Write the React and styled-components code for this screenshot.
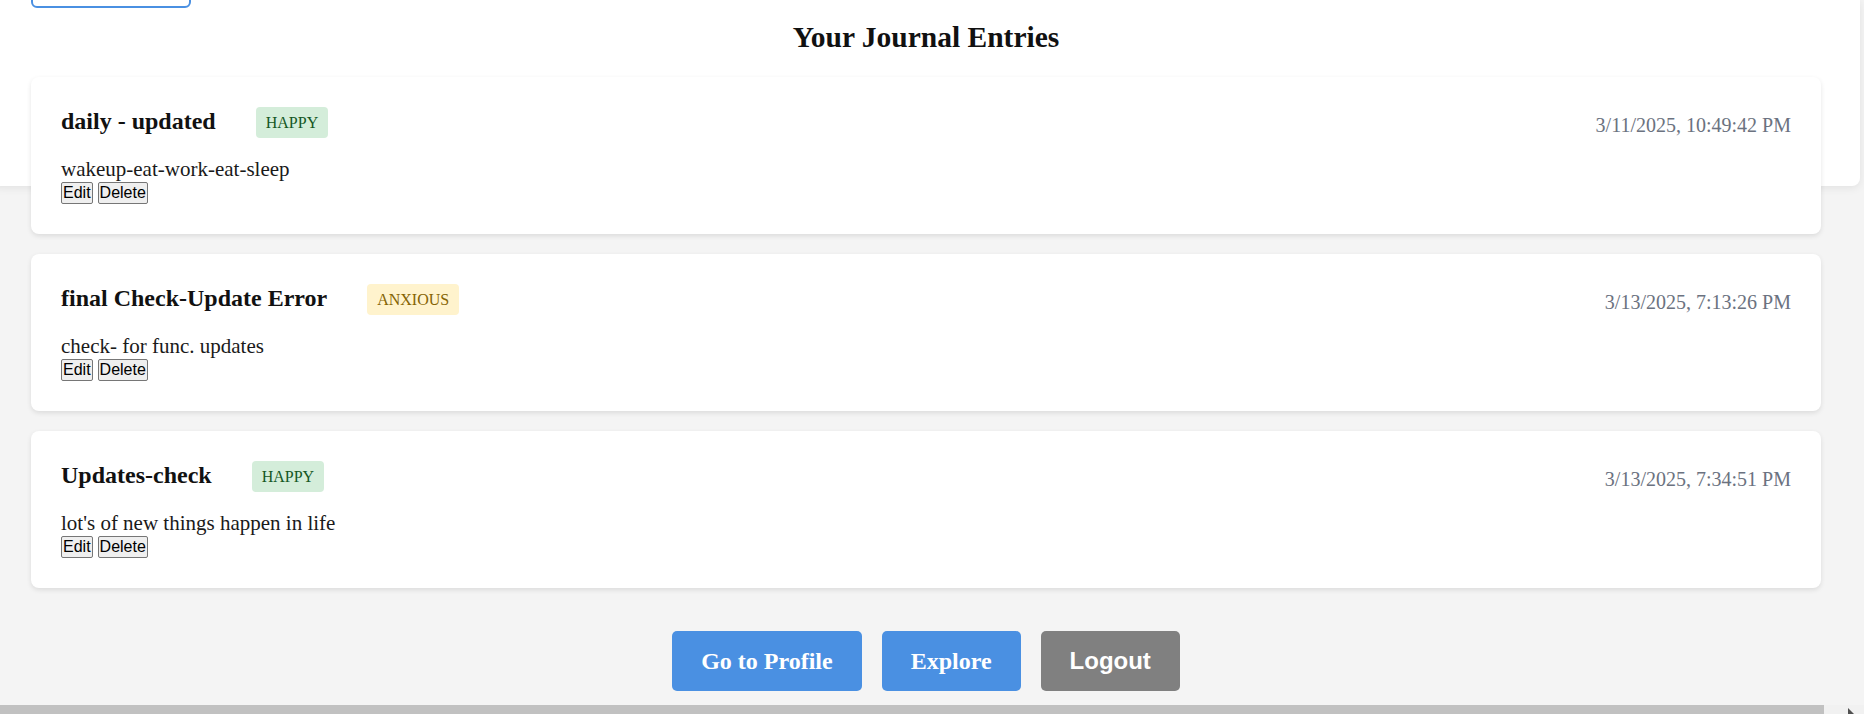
import React from "react";
import styled, { createGlobalStyle } from "styled-components";

const GlobalStyle = createGlobalStyle`
  html {
    background: #f4f4f4;
  }
  body {
    margin: 0;
    padding: 0;
    background: #f4f4f4;
    font-family: "Liberation Serif", "Times New Roman", serif;
    color: #1a1a1a;
  }
  * { box-sizing: border-box; }
`;

const Page = styled.main`
  display: flow-root;
`;

const Panel = styled.header`
  display: flow-root;
  width: 1868px;
  height: 186px;
  margin-left: -8px;
  padding: 0 39px;
  background: #ffffff;
  border-radius: 0 0 8px 8px;
  box-shadow: 0 2px 8px rgba(0, 0, 0, 0.08);
`;

const ComposeBox = styled.div`
  width: 160px;
  height: 40px;
  margin-top: -32px;
  border: 2px solid #4a90e2;
  border-radius: 6px;
  background: #ffffff;
`;

const PageTitle = styled.h2`
  margin: 13px 0 0;
  text-align: center;
  font-size: 29.5px;
  font-weight: 700;
  line-height: 33px;
  color: #111;
`;

const Content = styled.section`
  padding: 0 43px 0 31px;
`;

const EntryList = styled.div`
  display: flex;
  flex-direction: column;
  gap: 20px;
  margin-top: -109px;
`;

const Card = styled.article`
  padding: 30px;
  background: #ffffff;
  border-radius: 8px;
  box-shadow: 0 2px 5px rgba(0, 0, 0, 0.1);
`;

const CardHeader = styled.div`
  display: flex;
  justify-content: space-between;
  align-items: center;
`;

const TitleGroup = styled.div`
  display: flex;
  align-items: center;
  gap: 40px;
`;

const EntryTitle = styled.h3`
  margin: -4px 0 0;
  font-size: 24px;
  font-weight: 700;
  line-height: 28px;
  color: #111;
`;

const moodColors = {
  happy: { bg: "#d4edda", fg: "#155724" },
  anxious: { bg: "#fff3cd", fg: "#856404" },
};

const MoodBadge = styled.span`
  display: inline-block;
  padding: 6px 10px;
  font-size: 16px;
  line-height: 19px;
  border-radius: 4px;
  background: ${(p) => moodColors[p.$mood].bg};
  color: ${(p) => moodColors[p.$mood].fg};
`;

const EntryDate = styled.span`
  padding-top: 6px;
  font-size: 20px;
  line-height: 23px;
  color: #6b7280;
`;

const EntryContent = styled.p`
  margin: 18px 0 0;
  font-size: 21px;
  line-height: 26px;
  color: #1a1a1a;
`;

const Actions = styled.div`
  display: flex;
  gap: 5px;
`;

const SmallButton = styled.button`
  font-family: "Liberation Sans", Arial, sans-serif;
  font-size: 16px;
  line-height: 18px;
  padding: 1px 1px;
  border: 1px solid #767676;
  border-radius: 2px;
  background: #efefef;
  color: #000;
`;

const NavBar = styled.nav`
  display: flex;
  justify-content: center;
  gap: 20px;
  margin-top: 43px;
`;

const NavButton = styled.button`
  padding: 16px 29px;
  border: none;
  border-radius: 5px;
  font-family: ${(p) =>
    p.$variant === "muted"
      ? '"Liberation Sans", Arial, sans-serif'
      : '"Liberation Serif", "Times New Roman", serif'};
  font-size: 24px;
  font-weight: 700;
  line-height: 28px;
  color: #ffffff;
  background: ${(p) => (p.$variant === "muted" ? "#808080" : "#4a90e2")};
`;

const ScrollStrip = styled.div`
  position: fixed;
  left: 0;
  right: 0;
  top: 705px;
  height: 9px;
  display: flex;
  background: #f1f1f1;
`;

const ScrollThumb = styled.div`
  width: 1824px;
  height: 100%;
  background: #c1c1c1;
`;

const ScrollArrow = styled.div`
  flex: 1;
  display: flex;
  justify-content: flex-end;
  padding-right: 9px;
  padding-top: 3px;
`;

const entries = [
  {
    title: "daily - updated",
    mood: "happy",
    date: "3/11/2025, 10:49:42 PM",
    content: "wakeup-eat-work-eat-sleep",
  },
  {
    title: "final Check-Update Error",
    mood: "anxious",
    date: "3/13/2025, 7:13:26 PM",
    content: "check- for func. updates",
  },
  {
    title: "Updates-check",
    mood: "happy",
    date: "3/13/2025, 7:34:51 PM",
    content: "lot's of new things happen in life",
  },
];

export default function App() {
  return (
    <Page>
      <GlobalStyle />
      <Panel>
        <ComposeBox />
        <PageTitle>Your Journal Entries</PageTitle>
      </Panel>
      <Content>
        <EntryList>
          {entries.map((e) => (
            <Card key={e.title}>
              <CardHeader>
                <TitleGroup>
                  <EntryTitle>{e.title}</EntryTitle>
                  <MoodBadge $mood={e.mood}>{e.mood.toUpperCase()}</MoodBadge>
                </TitleGroup>
                <EntryDate>{e.date}</EntryDate>
              </CardHeader>
              <EntryContent>{e.content}</EntryContent>
              <Actions>
                <SmallButton>Edit</SmallButton>
                <SmallButton>Delete</SmallButton>
              </Actions>
            </Card>
          ))}
        </EntryList>
        <NavBar>
          <NavButton>Go to Profile</NavButton>
          <NavButton>Explore</NavButton>
          <NavButton $variant="muted">Logout</NavButton>
        </NavBar>
      </Content>
      <ScrollStrip>
        <ScrollThumb />
        <ScrollArrow>
          <svg width="7" height="6" viewBox="0 0 7 6">
            <polygon points="0,0 0,6 6,6" fill="#505050" />
          </svg>
        </ScrollArrow>
      </ScrollStrip>
    </Page>
  );
}
